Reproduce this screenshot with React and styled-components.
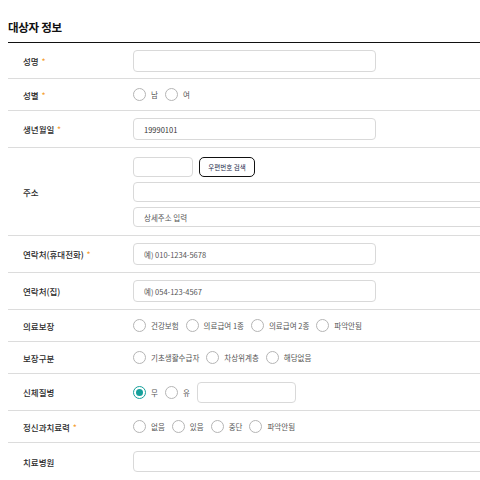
import React from 'react';
import styled, { createGlobalStyle } from 'styled-components';

const GlobalStyle = createGlobalStyle`
    body {
        margin: 0;
        background: #fff;
        overflow: hidden;
        font-family: "Noto Sans CJK KR", "Noto Sans", sans-serif;
        color: #333;
    }
`;

function Radio({ label, checked }) {
    return (
        <StRadioLabel>
            <StRadio type="radio" defaultChecked={checked} />
            <span>{label}</span>
        </StRadioLabel>
    );
}

function Row({ label, required, pad, children }) {
    return (
        <StRow $pad={pad}>
            <StLabel>
                {label}
                {required && <StStar>*</StStar>}
            </StLabel>
            <StField>{children}</StField>
        </StRow>
    );
}

function App() {
    return (
        <>
            <GlobalStyle />
            <StPage>
                <StTitle>대상자 정보</StTitle>
                <StTable>
                    <Row label="성명" required pad="6.5px">
                        <StInput />
                    </Row>
                    <Row label="성별" required pad="9px">
                        <StRadioGroup>
                            <Radio label="남" />
                            <Radio label="여" />
                        </StRadioGroup>
                    </Row>
                    <Row label="생년월일" required pad="7px">
                        <StInput defaultValue="19990101" />
                    </Row>
                    <Row label="주소" pad="9px 0 8px">
                        <StAddress>
                            <StZipLine>
                                <StInput $w="60px" $h="20px" />
                                <StZipButton type="button">우편번호 검색</StZipButton>
                            </StZipLine>
                            <StInput $w="360px" $h="20px" />
                            <StInput $w="360px" $h="20px" placeholder="상세주소 입력" />
                        </StAddress>
                    </Row>
                    <Row label="연락처(휴대전화)" required pad="7px">
                        <StInput placeholder="예) 010-1234-5678" />
                    </Row>
                    <Row label="연락처(집)" pad="7px">
                        <StInput placeholder="예) 054-123-4567" />
                    </Row>
                    <Row label="의료보장" pad="9px">
                        <StRadioGroup>
                            <Radio label="건강보험" />
                            <Radio label="의료급여 1종" />
                            <Radio label="의료급여 2종" />
                            <Radio label="파악안됨" />
                        </StRadioGroup>
                    </Row>
                    <Row label="보장구분" pad="9px">
                        <StRadioGroup>
                            <Radio label="기초생활수급자" />
                            <Radio label="차상위계층" />
                            <Radio label="해당없음" />
                        </StRadioGroup>
                    </Row>
                    <Row label="신체질병" pad="7.5px">
                        <StRadioGroup>
                            <Radio label="무" checked />
                            <Radio label="유" />
                            <StInput $w="99px" $h="21px" />
                        </StRadioGroup>
                    </Row>
                    <Row label="정신과치료력" required pad="9px">
                        <StRadioGroup>
                            <Radio label="없음" />
                            <Radio label="있음" />
                            <Radio label="중단" />
                            <Radio label="파악안됨" />
                        </StRadioGroup>
                    </Row>
                    <Row label="치료병원" pad="8px">
                        <StInput $w="360px" $h="21px" />
                    </Row>
                </StTable>
            </StPage>
        </>
    );
}

export default App;

const StPage = styled.div`
    width: 472px;
    padding: 19px 0 0 8px;
    overflow: hidden;
`;

const StTitle = styled.h2`
    margin: 0 0 7px;
    font-size: 11.5px;
    line-height: 16px;
    font-weight: 700;
    color: #111;
    letter-spacing: -0.3px;
`;

const StTable = styled.div`
    border-top: 1.5px solid #111;
`;

const StRow = styled.div`
    display: grid;
    grid-template-columns: 125px 1fr;
    align-items: center;
    padding: ${(p) => p.$pad} 0;
    border-bottom: 1px solid #dcdcdc;
`;

const StLabel = styled.div`
    padding-left: 15px;
    font-size: 8.5px;
    font-weight: 500;
    color: #2a2a2a;
    white-space: nowrap;
    display: flex;
    align-items: center;
`;

const StStar = styled.span`
    margin-left: 3px;
    color: #f5a032;
    font-size: 7px;
    font-weight: 700;
`;

const StField = styled.div`
    display: flex;
    align-items: center;
    min-width: 0;
`;

const StInput = styled.input`
    box-sizing: border-box;
    flex-shrink: 0;
    width: ${(p) => p.$w || '243px'};
    height: ${(p) => p.$h || '22px'};
    padding: 0 10px;
    border: 1px solid #d9d9d9;
    border-radius: 4px;
    background: #fff;
    font-family: inherit;
    font-size: 7.5px;
    color: #333;
    outline: none;

    &::placeholder {
        color: #555;
    }
`;

const StAddress = styled.div`
    display: flex;
    flex-direction: column;
    gap: 5px;
`;

const StZipLine = styled.div`
    display: flex;
    gap: 6px;
`;

const StZipButton = styled.button`
    box-sizing: border-box;
    width: 56px;
    height: 20px;
    padding: 0;
    border: 1.5px solid #111;
    border-radius: 5px;
    background: #fff;
    font-family: inherit;
    font-size: 6.5px;
    color: #1c2a4a;
    cursor: pointer;
`;

const StRadioGroup = styled.div`
    display: flex;
    align-items: center;
    gap: 7px;
`;

const StRadioLabel = styled.label`
    display: flex;
    align-items: center;
    gap: 5px;
    font-size: 7.5px;
    color: #555;
    white-space: nowrap;
`;

const StRadio = styled.input`
    appearance: none;
    box-sizing: border-box;
    width: 13px;
    height: 13px;
    margin: 0;
    border: 1px solid #b5b5b5;
    border-radius: 50%;
    background: #fff;
    display: grid;
    place-items: center;

    &:checked {
        border: 1.5px solid #16a09b;
    }

    &:checked::after {
        content: '';
        width: 7px;
        height: 7px;
        border-radius: 50%;
        background: #16a09b;
    }
`;
